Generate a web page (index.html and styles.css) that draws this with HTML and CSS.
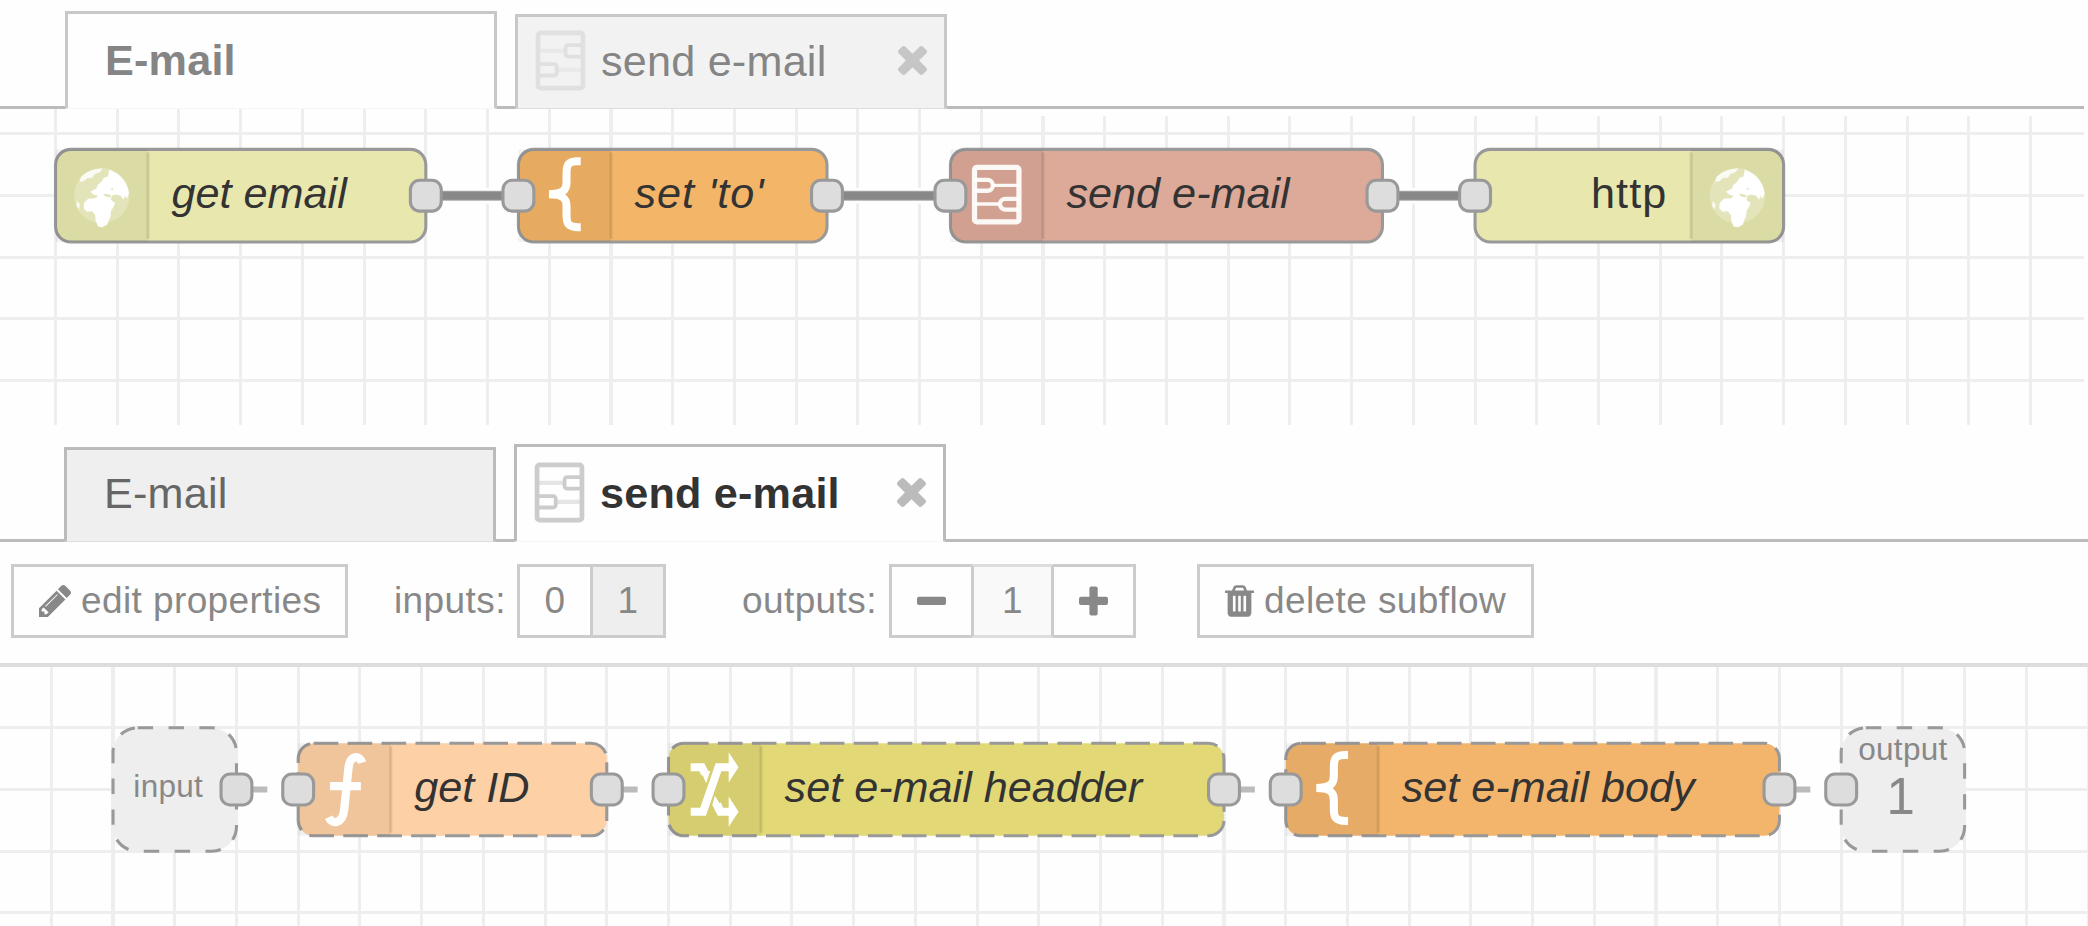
FILE: index.html
```
<!DOCTYPE html>
<html lang="en">
<head>
<meta charset="utf-8">
<title>Flow editor</title>
<link rel="stylesheet" href="styles.css">
</head>
<body>
<svg class="defs" width="0" height="0">
  <defs>
    <symbol id="close" viewBox="110 366 1188 1188"><path d="M1298 1322q0 40-28 68l-136 136q-28 28-68 28t-68-28l-294-294-294 294q-28 28-68 28t-68-28l-136-136q-28-28-28-68t28-68l294-294-294-294q-28-28-28-68t28-68l136-136q28-28 68-28t68 28l294 294 294-294q28-28 68-28t68 28l136 136q28 28 28 68t-28 68l-294 294 294 294q28 28 28 68z"/></symbol>
    <symbol id="subflow-tab" viewBox="0 0 16 19.3">
      <g fill="none" stroke="currentColor">
        <rect x=".9" y=".9" width="14.2" height="17.5" rx=".8" stroke-width="1.5"/>
        <path d="M15.1 4.8H10.400a.8.8 0 0 0-.8.8v2a.8.8 0 0 0 .8.8h4.700M.9 10.800h5.100a.8.8 0 0 1 .8.8v2a.8.8 0 0 1-.8.8H.9" stroke-width="1.200"/>
        <path d="M.9 6.600h8.700M6.800 12.600h8.300" stroke-width="1.300" opacity=".5"/>
      </g>
    </symbol>
    <g id="port"><rect x="-5" y="-5" width="10" height="10" rx="3"/></g>
    <g id="icon-bg"><path d="M0-15h30v30H0z" fill="#000" fill-opacity=".05"/></g>
    <g id="brace"><path d="M20.200-11.200h-.8c-3.200 0-3.800 1.100-3.800 3.900v3c0 2.300-1 3.800-5.700 3.800 4.700 0 5.700 1.500 5.700 3.800v3c0 2.800.6 3.900 3.800 3.900h.8" fill="none" stroke="#fff" stroke-width="2.600"/></g>
    <g id="globe">
      <circle cx="15" cy="0" r="9" fill="#fff" fill-opacity=".25"/>
      <path d="M8.300-6.200l1.800-1.300 1.200-.6 1.800-.5 2.200-.3-.9 1.300-1.700.6-.8 1.200-1.500.1-1.300 1-1.300.2z" fill="#fff" fill-opacity=".85"/>
      <path d="M17.400-8.400c3.600 1.200 6 4.200 6.400 7.600l-.6 1.700-.8-.8-.4 1.200-.9-1.300-1.500-.4-1.300.3-.4 1.500 1.400.9-.6 1.500-.7 1.100-.2 1.900-.6 1.200-.4 1.300-1.600.9-1.400-.2-.8-1.900-.1-1.800-1-1.300-1.700.2-1.100-1.100.2-1.800 1.300-1.300 2.300-.2.900-.7-1.500-.5-1-.9 2-1 .3-1.100 1.300-1.100.8-1.300 1.300-.4z" fill="#fff"/>
      <path d="M7 1.600l.9 1.200-.2 1.600-.9-1z" fill="#fff" fill-opacity=".8"/>
      <path d="M15.400-.6l1.800.1 1 .6-.8.500-1.300-.4zM17.700-2.200l1-.3-.2.700z" fill="#e4e4bd"/>
    </g>
  </defs>
</svg>

<section class="editor editor-flow">
  <ul class="tabs">
    <li class="tab active"><span class="label">E-mail</span></li>
    <li class="tab"><svg class="tab-icon"><use href="#subflow-tab"/></svg><span class="label">send e-mail</span><svg class="close"><use href="#close"/></svg></li>
  </ul>
  <svg class="canvas" width="2084" height="316">
    <g transform="translate(55.500 86.700) scale(3.086)">
      <g class="grid" transform="translate(0 -.07)">
        <path d="M-20.500 23.500H302" stroke-width="103" stroke-dasharray="1 19"/>
        <path d="M299.500 24.300H660" stroke-width="100" stroke-dasharray="1 19"/>
        <path d="M-20-20H660M-20 0H660M-20 20H660M-20 40H660M-20 60H660"/>
      </g>
      <g class="wire-bg"><path d="M120 0h30M250 0h40M430 0h30"/></g>
      <g class="wire-edge"><path d="M120 0h30M250 0h40M430 0h30"/></g>
      <g class="wire"><path d="M120 0h30M250 0h40M430 0h30"/></g>
      <g>
        <rect class="node" y="-15" width="120" height="30" rx="5" fill="#e7e7ae"/>
        <use href="#icon-bg"/><path class="divider" d="M30-14v28"/>
        <use href="#globe"/>
        <text class="node-label" x="37.600" y="4.100">get email</text>
        <use class="port" href="#port" x="120"/>
      </g>
      <g transform="translate(150)">
        <rect class="node" y="-15" width="100" height="30" rx="5" fill="#f3b567"/>
        <use href="#icon-bg"/><path class="divider" d="M30-14v28"/>
        <use href="#brace"/>
        <text class="node-label spaced" x="37.600" y="4.100">set 'to'</text>
        <use class="port" href="#port"/><use class="port" href="#port" x="100"/>
      </g>
      <g transform="translate(290)">
        <rect class="node" y="-15" width="140" height="30" rx="5" fill="#dda998"/>
        <use href="#icon-bg"/><path class="divider" d="M30-14v28"/>
        <g transform="translate(7 -10)" fill="none" stroke="#fff" stroke-opacity=".92">
          <rect x=".8" y=".8" width="14.400" height="17.700" rx=".8" stroke-width="1.700"/>
          <path d="M.8 4.900h4.200a1.700 1.700 0 0 1 0 3.500H.8M15.200 11h-4.400a1.700 1.700 0 0 0 0 3.500h4.400" stroke-width="1.400"/>
          <path d="M6.800 6.650h8.400M.8 12.700h8.300" stroke-width="1.100"/>
        </g>
        <text class="node-label" x="37.600" y="4.100">send e-mail</text>
        <use class="port" href="#port"/><use class="port" href="#port" x="140"/>
      </g>
      <g transform="translate(460)">
        <rect class="node" y="-15" width="100" height="30" rx="5" fill="#e7e7ae"/>
        <use href="#icon-bg" x="70"/><path class="divider" d="M70-14v28"/>
        <use href="#globe" x="70"/>
        <text class="node-label upright" x="62.300" y="4.100" text-anchor="end">http</text>
        <use class="port" href="#port"/>
      </g>
    </g>
  </svg>
</section>

<section class="editor editor-subflow">
  <ul class="tabs">
    <li class="tab"><span class="label">E-mail</span></li>
    <li class="tab active"><svg class="tab-icon"><use href="#subflow-tab"/></svg><span class="label">send e-mail</span><svg class="close"><use href="#close"/></svg></li>
  </ul>
  <div class="toolbar">
    <a class="button edit"><svg class="icon-pencil" viewBox="128 149 1515 1515"><path d="M491 1536l91-91-235-235-91 91v107h128v128h107zm523-928q0-22-22-22-10 0-17 7l-542 542q-7 7-7 17 0 22 22 22 10 0 17-7l542-542q7-7 7-17zm-54-192l416 416-832 832h-416v-416zm683 96q0 53-37 90l-166 166-416-416 166-165q36-38 90-38 53 0 91 38l235 234q37 39 37 91z"/></svg><span>edit properties</span></a>
    <span class="caption inputs">inputs:</span>
    <span class="group toggle"><a>0</a><a class="selected">1</a></span>
    <span class="caption outputs">outputs:</span>
    <span class="group spinner"><a><svg width="29" height="30" viewBox="0 0 29 30"><rect y="10.700" width="29" height="8.300" rx="2"/></svg></a><span class="value">1</span><a><svg width="29" height="30" viewBox="0 0 29 30"><rect y="10.700" width="29" height="8.300" rx="2"/><rect x="10.400" y=".5" width="8.300" height="29" rx="2"/></svg></a></span>
    <a class="button delete"><svg class="icon-trash" viewBox="192 128 1408 1536"><path d="M704 1376v-704q0-14-9-23t-23-9h-64q-14 0-23 9t-9 23v704q0 14 9 23t23 9h64q14 0 23-9t9-23zm256 0v-704q0-14-9-23t-23-9h-64q-14 0-23 9t-9 23v704q0 14 9 23t23 9h64q14 0 23-9t9-23zm256 0v-704q0-14-9-23t-23-9h-64q-14 0-23 9t-9 23v704q0 14 9 23t23 9h64q14 0 23-9t9-23zm-544-992h448l-48-117q-7-9-17-11h-317q-10 2-17 11zm928 32v64q0 14-9 23t-23 9h-96v948q0 83-47 143.500t-113 60.500h-832q-66 0-113-58.500t-47-141.500v-952h-96q-14 0-23-9t-9-23v-64q0-14 9-23t23-9h309l70-167q15-37 54-63t79-26h320q40 0 79 26t54 63l70 167h309q14 0 23 9t9 23z"/></svg><span>delete subflow</span></a>
  </div>
  <svg class="canvas" width="2088" height="259">
    <g transform="translate(51.300 122.500) scale(3.086)">
      <g class="grid">
        <path d="M-20.500 3H670" stroke-width="90" stroke-dasharray="1 19"/>
        <path d="M-20-20H670M-20 0H670M-20 20H670M-20 40H670"/>
      </g>
      <g class="wire-bg"><path d="M60 0h20M180 0h20M380 0h20M560 0h20"/></g>
      <g class="wire-stub"><path d="M60 0h10M180 0h10M380 0h10M560 0h10"/></g>
      <g transform="translate(20)">
        <rect class="node terminal" y="-20" width="40" height="40" rx="8"/>
        <text class="terminal-label" x="17.900" y="2.500">input</text>
        <use class="port" href="#port" x="40"/>
      </g>
      <g transform="translate(80)">
        <rect class="node dashed" y="-15" width="100" height="30" rx="5" fill="#fdd0a5"/>
        <use href="#icon-bg"/><path class="divider" d="M30-14v28"/>
        <path d="M20.700-8.700C20-11.300 16.800-11.200 16.300-7L14.900 6.500C14.400 11.200 11 11.500 9.900 9M10.300-1.100h10" fill="none" stroke="#fff" stroke-width="2.700"/>
        <text class="node-label" x="37.600" y="4.100">get ID</text>
        <use class="port" href="#port"/><use class="port" href="#port" x="100"/>
      </g>
      <g transform="translate(200)">
        <rect class="node dashed" y="-15" width="180" height="30" rx="5" fill="#e2d976"/>
        <use href="#icon-bg"/><path class="divider" d="M30-14v28"/>
        <path d="M7.200 7.200h4L16.200-7.200H20M7.200-7.200h3.600l1.100 2.200M15.800 4.700l1 2.500H20" fill="none" stroke="#fff" stroke-width="2.600"/>
        <path d="M19.500-12.100l3.200 4.900-3.200 4.900zM19.500 2.300l3.200 4.900-3.200 4.900zM10.500-6l3 0-1.300 4zM15 2l2.500 4-2 1.500-1.300-2.500z" fill="#fff"/>
        <text class="node-label" x="37.600" y="4.100">set e-mail headder</text>
        <use class="port" href="#port"/><use class="port" href="#port" x="180"/>
      </g>
      <g transform="translate(400)">
        <rect class="node dashed" y="-15" width="160" height="30" rx="5" fill="#f3b56c"/>
        <use href="#icon-bg"/><path class="divider" d="M30-14v28"/>
        <use href="#brace"/>
        <text class="node-label" x="37.600" y="4.100">set e-mail body</text>
        <use class="port" href="#port"/><use class="port" href="#port" x="160"/>
      </g>
      <g transform="translate(580)">
        <rect class="node terminal" y="-20" width="40" height="40" rx="8"/>
        <text class="terminal-label" x="20" y="-9.500">output</text>
        <text class="terminal-label index" x="19.300" y="8">1</text>
        <use class="port" href="#port"/>
      </g>
    </g>
  </svg>
</section>
</body>
</html>
```
FILE: styles.css
```
* { box-sizing: border-box; }
body {
  margin: 0;
  width: 2088px;
  height: 926px;
  overflow: hidden;
  background: #fefefe;
  font-family: "Liberation Sans", Arial, sans-serif;
}
.defs { display: block; height: 0; }
svg { flex: none; fill: currentColor; }

.tabs {
  display: flex;
  align-items: flex-end;
  gap: 18px;
  list-style: none;
  margin: 0;
  padding: 0 0 0 65px;
  height: 109px;
  background: linear-gradient(#bbb, #bbb) left bottom / 100% 3px no-repeat;
}
.editor-flow { width: 2084px; height: 425px; }
.editor-subflow .tabs { height: 117px; padding-left: 64px; }
.tab {
  display: flex;
  align-items: center;
  width: 432px;
  height: 95px;
  border: 3px solid #bbb;
  border-bottom: 1px solid #ddd;
  background: #efefef;
  color: #666;
  font-size: 43.200px;
  line-height: 50px;
  padding: 0 17px 4px 19px;
}
.tab .label { letter-spacing: .2px; }
.tab.active { height: 98px; padding-bottom: 2px; background: #fefefe; color: #333; font-weight: bold; border-bottom-color: #f6f6f6; }
.editor-subflow .tab { padding-bottom: 5px; }
.editor-subflow .tab.active { padding-bottom: 3px; }
.editor-flow .tab { border-color: #c8c8c8; background: #f2f2f2; color: #858585; border-bottom-color: #ddd; }
.editor-flow .tab.active { background: #fefefe; border-bottom-color: #f6f6f6; }
.tab:first-child { padding-left: 37px; }
.tab-icon { width: 51px; height: 61px; margin: 0 15px 0 -2px; color: #ccc; }
.editor-flow .tab-icon { color: #e0e0e0; }
.close { width: 29px; height: 29px; margin-left: auto; color: #bbb; }
.editor-flow .close { color: #c6c6c6; }

.toolbar {
  display: flex;
  align-items: flex-start;
  height: 125px;
  padding: 22px 0 0 11px;
  border-bottom: 4px solid #ddd;
  color: #888;
  font-size: 37px;
  line-height: 68px;
  letter-spacing: .4px;
  white-space: nowrap;
}
.button, .group { display: flex; align-items: center; height: 74px; border: 3px solid #ccc; }
.button { padding-left: 25px; }
.button.edit { width: 337px; }
.button.delete { width: 337px; margin-left: 61px; }
.icon-pencil { width: 32px; height: 32px; margin-right: 10px; }
.icon-trash { width: 29px; height: 32px; margin-right: 10px; }
.caption { line-height: 74px; }
.inputs { width: 169px; padding-left: 46px; }
.toggle a { width: 70px; text-align: center; }
.toggle a + a { width: 73px; border-left: 3px solid #ccc; background: #eee; }
.outputs { width: 223px; padding-left: 76px; }
.toggle { width: 149px; }
.spinner { width: 247px; }
.spinner a { display: flex; align-items: center; justify-content: center; width: 79px; height: 68px; }
.spinner .value {
  width: 83px;
  height: 74px;
  border: 3px solid #ccc;
  border-top-color: #ddd;
  border-bottom-color: #ddd;
  background: #f9f9f9;
  text-align: center;
}

.canvas { display: block; }
.grid { fill: none; stroke: #eee; stroke-width: .97; shape-rendering: crispEdges; }
.wire-bg { stroke: #fefefe; stroke-width: 5; }
.wire-edge { stroke: #aaa; stroke-width: 3.200; }
.wire { stroke: #888; stroke-width: 2.600; }
.wire-stub { stroke: #bbb; stroke-width: 2; }
.node { stroke: #999; stroke-width: 1; }
.node.dashed { stroke-dasharray: 8 3; }
.node.terminal { fill: #eee; stroke-dasharray: 5 5; }
.divider { stroke: #000; stroke-opacity: .1; stroke-width: 1; }
.port { fill: #ddd; stroke: #999; stroke-width: 1; }
.node-label { font-size: 14px; font-style: italic; fill: #333; }
.node-label.spaced { letter-spacing: .32px; }
.node-label.upright { font-style: normal; letter-spacing: .35px; }
.terminal-label { font-size: 10.200px; letter-spacing: .1px; fill: #888; text-anchor: middle; }
.terminal-label.index { font-size: 16.500px; }
```
